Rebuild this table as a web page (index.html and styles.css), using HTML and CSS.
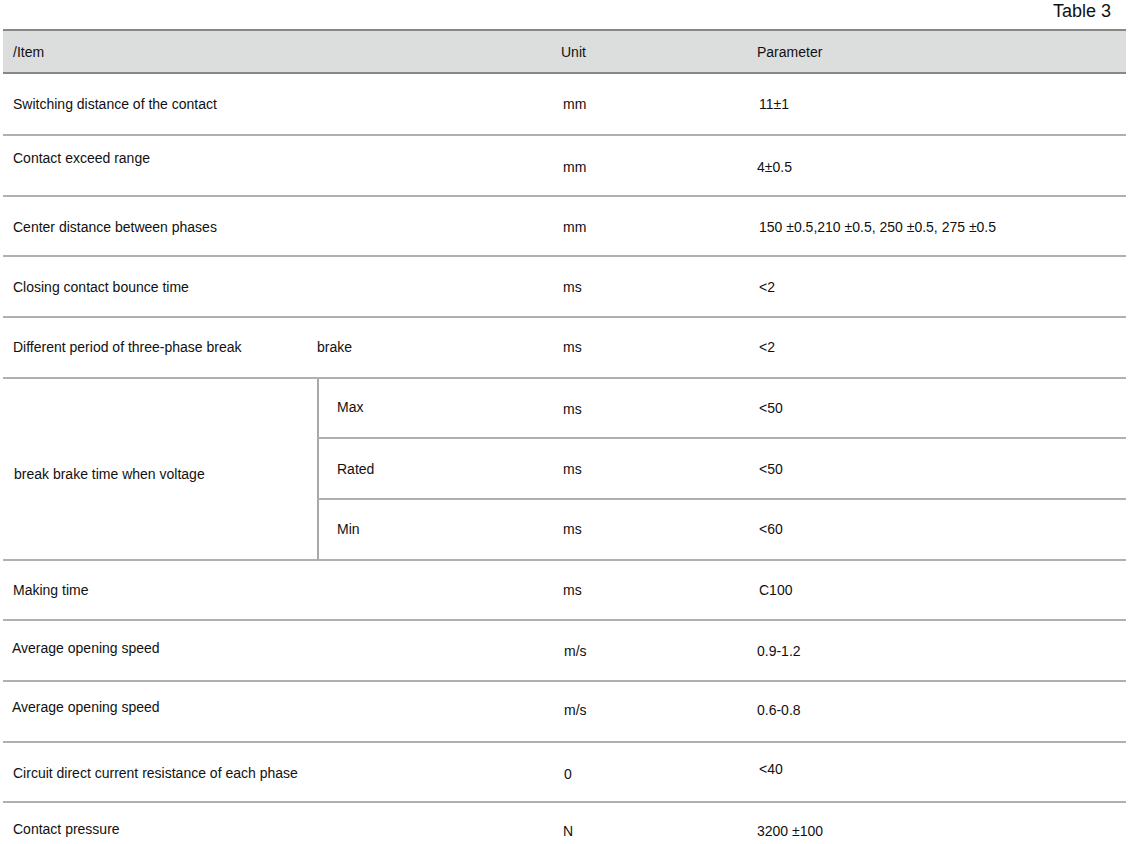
FILE: index.html
```html
<!DOCTYPE html>
<html lang="en">
<head>
<meta charset="utf-8">
<title>Table 3</title>
<link rel="stylesheet" href="styles.css">
</head>
<body>
<div class="caption">Table 3</div>
<table class="spec">
  <colgroup>
    <col class="c-item">
    <col class="c-sub">
    <col class="c-unit">
    <col class="c-param">
  </colgroup>
  <thead>
    <tr class="head">
      <th colspan="2" class="item">/Item</th>
      <th class="unit head-unit">Unit</th>
      <th class="param head-param">Parameter</th>
    </tr>
  </thead>
  <tbody>
    <tr class="first">
      <td colspan="2" class="item">Switching distance of the contact</td>
      <td class="unit">mm</td>
      <td class="param">11±1</td>
    </tr>
    <tr>
      <td colspan="2" class="item up7">Contact exceed range</td>
      <td class="unit dn1">mm</td>
      <td class="param p-tight dn1">4±0.5</td>
    </tr>
    <tr>
      <td colspan="2" class="item dn1">Center distance between phases</td>
      <td class="unit dn1">mm</td>
      <td class="param dn1">150 ±0.5,210 ±0.5, 250 ±0.5, 275 ±0.5</td>
    </tr>
    <tr>
      <td colspan="2" class="item">Closing contact bounce time</td>
      <td class="unit">ms</td>
      <td class="param">&lt;2</td>
    </tr>
    <tr>
      <td class="item">Different period of three-phase break</td>
      <td class="flush">brake</td>
      <td class="unit">ms</td>
      <td class="param">&lt;2</td>
    </tr>
    <tr>
      <td rowspan="3" class="item group dn5">break brake time when voltage</td>
      <td class="sub up1">Max</td>
      <td class="unit dn1">ms</td>
      <td class="param">&lt;50</td>
    </tr>
    <tr>
      <td class="sub">Rated</td>
      <td class="unit">ms</td>
      <td class="param">&lt;50</td>
    </tr>
    <tr>
      <td class="sub">Min</td>
      <td class="unit">ms</td>
      <td class="param">&lt;60</td>
    </tr>
    <tr>
      <td colspan="2" class="item">Making time</td>
      <td class="unit">ms</td>
      <td class="param">C100</td>
    </tr>
    <tr>
      <td colspan="2" class="item tight up3">Average opening speed</td>
      <td class="unit u-wide">m/s</td>
      <td class="param p-tight">0.9-1.2</td>
    </tr>
    <tr>
      <td colspan="2" class="item tight up4">Average opening speed</td>
      <td class="unit u-wide up1">m/s</td>
      <td class="param p-tight up1">0.6-0.8</td>
    </tr>
    <tr>
      <td colspan="2" class="item dn1">Circuit direct current resistance of each phase</td>
      <td class="unit u-wide dn2">0</td>
      <td class="param up3">&lt;40</td>
    </tr>
    <tr class="last">
      <td colspan="2" class="item up5">Contact pressure</td>
      <td class="unit up3">N</td>
      <td class="param p-tight up3">3200 ±100</td>
    </tr>
  </tbody>
</table>
</body>
</html>
```

FILE: styles.css
```css
html, body {
  margin: 0;
  padding: 0;
  background: #ffffff;
}

body {
  width: 1128px;
  height: 844px;
  overflow: hidden;
  font-family: "Liberation Sans", Arial, sans-serif;
  color: #111111;
}

.caption {
  height: 29px;
  box-sizing: border-box;
  padding: 1px 17px 0 0;
  font-size: 18px;
  line-height: 20px;
  text-align: right;
  color: #111111;
}

.spec {
  margin-left: 3px;
  width: 1123px;
  table-layout: fixed;
  border-collapse: separate;
  border-spacing: 0;
  font-size: 14px;
  line-height: 16px;
}

.c-item { width: 314px; }
.c-sub { width: 226px; }
.c-unit { width: 194px; }
.c-param { width: 389px; }

.spec th {
  font-weight: normal;
  text-align: left;
  background: #dcdddd;
  height: 41px;
  padding: 0;
  border-top: 2px solid #878787;
  border-bottom: 2px solid #878787;
  vertical-align: middle;
}

.spec td {
  padding: 0;
  text-align: left;
  vertical-align: middle;
  border-bottom: 2px solid #b0b0b0;
  white-space: nowrap;
}

.spec tbody tr { height: 60.67px; }
.spec tbody tr.first { height: 62px; }
.spec tbody tr.last td { border-bottom: none; }

.item { padding-left: 10px !important; }
.item.tight { padding-left: 9px !important; }
.item.group { padding-left: 11px !important; }

.flush { padding-left: 0 !important; }

.sub {
  padding-left: 18px !important;
  border-left: 2px solid #a8a8a8;
}

.unit { padding-left: 20px !important; }
.unit.u-wide { padding-left: 21px !important; }
.head-unit { padding-left: 18px !important; }

.param { padding-left: 22px !important; }
.param.p-tight { padding-left: 20px !important; }
.head-param { padding-left: 20px !important; }

/* small vertical offsets of text within its row */
.up1 { padding-bottom: 2px !important; }
.up3 { padding-bottom: 6px !important; }
.up4 { padding-bottom: 8px !important; }
.up5 { padding-bottom: 10px !important; }
.up7 { padding-bottom: 14px !important; }
.dn1 { padding-top: 3px !important; }
.dn2 { padding-top: 4px !important; }
.dn5 { padding-top: 10px !important; }
```
